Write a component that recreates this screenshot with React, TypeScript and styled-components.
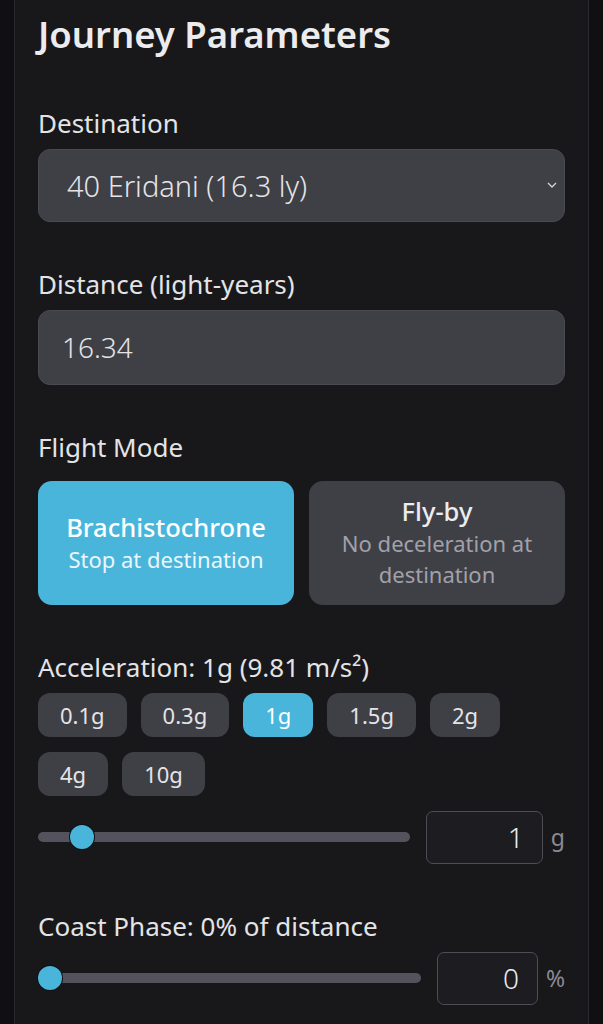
import * as React from "react";
import styled, { createGlobalStyle } from "styled-components";

const GlobalStyle = createGlobalStyle`
  html, body {
    margin: 0;
    padding: 0;
    background: #101012;
  }
  body {
    font-family: "Noto Sans", "Open Sans", sans-serif;
    color: #e4e4e7;
  }
  * {
    box-sizing: border-box;
  }
`;

const Panel = styled.div`
  margin: 0 14px;
  min-height: 100vh;
  background: #18181b;
  border-left: 1px solid #2a2a2e;
  border-right: 1px solid #2a2a2e;
  padding: 13px 23px 18px;
  display: flex;
  flex-direction: column;
`;

const Title = styled.h2`
  margin: 0 0 48px;
  font-size: 36.5px;
  line-height: 1.2;
  font-weight: 600;
  color: #ececef;
`;

const Field = styled.div<{ $gap?: number }>`
  display: flex;
  flex-direction: column;
  gap: ${(p) => p.$gap ?? 8}px;
  margin-bottom: 44px;
  &:last-child {
    margin-bottom: 0;
  }
`;

const Label = styled.label`
  font-size: 26px;
  line-height: 36px;
  color: #e4e4e7;
`;

const SelectWrap = styled.div`
  position: relative;
`;

const Select = styled.select`
  appearance: none;
  width: 100%;
  height: 73px;
  padding: 0 40px 0 28px;
  border: 1px solid #4a4a52;
  border-radius: 12px;
  background: #3f3f46;
  color: #e4e4e7;
  font-family: inherit;
  font-size: 29px;
  font-weight: 300;
  outline: none;
`;

const Chevron = styled.svg`
  position: absolute;
  right: 8px;
  top: 50%;
  width: 10px;
  height: 10px;
  margin-top: -5px;
  pointer-events: none;
`;

const TextInput = styled.input`
  width: 100%;
  height: 75px;
  padding: 0 23px;
  border: 1px solid #4a4a52;
  border-radius: 12px;
  background: #3f3f46;
  color: #e4e4e7;
  font-family: inherit;
  font-size: 28px;
  font-weight: 300;
  outline: none;
`;

const ModeGrid = styled.div`
  display: grid;
  grid-template-columns: 1fr 1fr;
  gap: 15px;
`;

const ModeButton = styled.button<{ $active?: boolean }>`
  height: 124px;
  border: none;
  border-radius: 14px;
  padding: 0 20px;
  background: ${(p) => (p.$active ? "#4ab5da" : "#3f3f46")};
  display: flex;
  flex-direction: column;
  align-items: center;
  justify-content: center;
  font-family: inherit;
  text-align: center;
  cursor: pointer;
`;

const ModeTitle = styled.div<{ $active?: boolean }>`
  font-size: 25.5px;
  line-height: 33px;
  font-weight: 500;
  color: ${(p) => (p.$active ? "#ffffff" : "#ececef")};
`;

const ModeSub = styled.div<{ $active?: boolean }>`
  font-size: 22px;
  line-height: 31px;
  color: ${(p) => (p.$active ? "#eaf7fc" : "#a1a1aa")};
`;

const Chips = styled.div`
  display: flex;
  flex-wrap: wrap;
  gap: 15px 14px;
  margin-bottom: 15px;
`;

const Chip = styled.button<{ $active?: boolean }>`
  height: 44px;
  padding: 0 22px;
  border: none;
  border-radius: 12px;
  background: ${(p) => (p.$active ? "#4ab5da" : "#3f3f46")};
  color: ${(p) => (p.$active ? "#ffffff" : "#e4e4e7")};
  font-family: inherit;
  font-size: 22px;
  cursor: pointer;
`;

const SliderRow = styled.div`
  display: flex;
  align-items: center;
  height: 53px;
`;

const Range = styled.input`
  flex: 1;
  margin: 0 16px 0 0;
  height: 24px;
  appearance: none;
  background: transparent;
  &::-webkit-slider-runnable-track {
    height: 10px;
    border-radius: 5px;
    background: #54525c;
  }
  &::-webkit-slider-thumb {
    appearance: none;
    width: 24px;
    height: 24px;
    margin-top: -7px;
    border-radius: 50%;
    background: #4ab5da;
    box-shadow: 0 0 0 1px #111114;
  }
`;

const NumberBox = styled.input<{ $w: number }>`
  width: ${(p) => p.$w}px;
  height: 53px;
  padding: 0 18px;
  border: 1px solid #4d4d55;
  border-radius: 7px;
  background: #1d1d21;
  color: #ececef;
  font-family: inherit;
  font-size: 28px;
  font-weight: 300;
  text-align: right;
  outline: none;
  appearance: textfield;
  &::-webkit-inner-spin-button {
    appearance: none;
  }
`;

const Unit = styled.span`
  margin-left: 8px;
  font-size: 23px;
  color: #8b8b93;
`;

const accelerations = ["0.1g", "0.3g", "1g", "1.5g", "2g", "4g", "10g"];

export default function App() {
  const [accel, setAccel] = React.useState(1);
  const [coast, setCoast] = React.useState(0);
  const [mode, setMode] = React.useState<"brach" | "flyby">("brach");

  return (
    <>
      <GlobalStyle />
      <Panel>
        <Title>Journey Parameters</Title>

        <Field>
          <Label>Destination</Label>
          <SelectWrap>
            <Select defaultValue="eri">
              <option value="eri">40 Eridani (16.3 ly)</option>
            </Select>
            <Chevron viewBox="0 0 10 10">
              <path d="M1 3l4 4 4-4" fill="none" stroke="#d4d4d8" strokeWidth="1.3" />
            </Chevron>
          </SelectWrap>
        </Field>

        <Field>
          <Label>Distance (light-years)</Label>
          <TextInput defaultValue="16.34" />
        </Field>

        <Field $gap={16}>
          <Label>Flight Mode</Label>
          <ModeGrid>
            <ModeButton $active={mode === "brach"} onClick={() => setMode("brach")}>
              <ModeTitle $active={mode === "brach"}>Brachistochrone</ModeTitle>
              <ModeSub $active={mode === "brach"}>Stop at destination</ModeSub>
            </ModeButton>
            <ModeButton $active={mode === "flyby"} onClick={() => setMode("flyby")}>
              <ModeTitle $active={mode === "flyby"}>Fly-by</ModeTitle>
              <ModeSub $active={mode === "flyby"}>No deceleration at destination</ModeSub>
            </ModeButton>
          </ModeGrid>
        </Field>

        <Field>
          <Label>
            Acceleration: {accel}g ({(accel * 9.81).toFixed(2)} m/s²)
          </Label>
          <div>
            <Chips>
              {accelerations.map((a) => (
                <Chip
                  key={a}
                  $active={parseFloat(a) === accel}
                  onClick={() => setAccel(parseFloat(a))}
                >
                  {a}
                </Chip>
              ))}
            </Chips>
            <SliderRow>
              <Range
                type="range"
                min={0.1}
                max={10}
                step={0.1}
                value={accel}
                onChange={(e) => setAccel(parseFloat(e.target.value))}
              />
              <NumberBox $w={117} type="number" value={accel} readOnly />
              <Unit>g</Unit>
            </SliderRow>
          </div>
        </Field>

        <Field>
          <Label>Coast Phase: {coast}% of distance</Label>
          <SliderRow>
            <Range
              type="range"
              min={0}
              max={100}
              value={coast}
              onChange={(e) => setCoast(parseInt(e.target.value))}
            />
            <NumberBox $w={101} type="number" value={coast} readOnly />
            <Unit>%</Unit>
          </SliderRow>
        </Field>
      </Panel>
    </>
  );
}
